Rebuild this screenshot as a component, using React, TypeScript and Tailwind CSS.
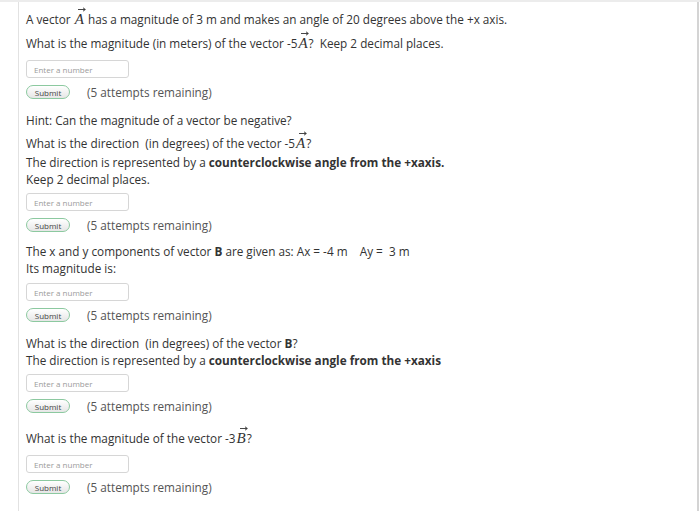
import React from 'react';

const Vec = ({ letter }: { letter: string }) => (
  <span className="relative inline-block font-['Liberation_Serif',serif] italic text-[15px] leading-[12px] px-[1px]">
    {letter}
    <svg className="absolute left-[4px] top-[-6px]" width="8" height="5" viewBox="0 0 8 5">
      <path d="M0 2.5 H7 M5 0.8 L7.4 2.5 L5 4.2" stroke="#333" strokeWidth="0.9" fill="none" />
    </svg>
  </span>
);

const AnswerBox = ({ top = 'mt-[8px]' }: { top?: string }) => (
  <div className={top}>
    <div className="w-[103px] h-[18px] border border-[#d6d6d6] rounded-[3px] flex items-center pl-[7px] text-[8px] text-[#9a9a9a]">
      Enter a number
    </div>
    <div className="mt-[7px] flex items-center h-[14px]">
      <div className="w-[44px] h-[14px] rounded-full border border-[#8cc9a0] bg-gradient-to-b from-[#ffffff] to-[#e6e6e6] flex items-center justify-center text-[8px] text-[#444]">
        Submit
      </div>
      <span className="ml-[17px] text-[11.75px] text-[#555]">(5 attempts remaining)</span>
    </div>
  </div>
);

export default function App() {
  return (
    <div className="w-[700px] h-[511px] bg-white border-t-2 border-[#ececec] font-['Open_Sans',sans-serif] text-[11.75px] leading-[17px] text-[#333] overflow-hidden">
      <div className="ml-[18px] w-[681px] h-full border-l border-[#e2e2e2] border-r-2 border-r-[#d4d4d4] pl-[7px] pt-[9px]">
        {/* Question 1 */}
        <p>A vector <Vec letter="A" /> has a magnitude of 3 m and makes an angle of 20 degrees above the +x axis.</p>
        <p className="mt-[7px]">What is the magnitude (in meters) of the vector -5<Vec letter="A" />?&nbsp; Keep 2 decimal places.</p>
        <AnswerBox top="mt-[8px]" />

        {/* Question 2 */}
        <p className="mt-[13px]">Hint: Can the magnitude of a vector be negative?</p>
        <p className="mt-[6px]">What is the direction&nbsp; (in degrees) of the vector -5<Vec letter="A" />?</p>
        <p className="mt-[2px]">
          The direction is represented by a <b>counterclockwise angle from the +xaxis.</b>
          <br />
          Keep 2 decimal places.
        </p>
        <AnswerBox top="mt-[5px]" />

        {/* Question 3 */}
        <p className="mt-[11px]">
          The x and y components of vector <b>B</b> are given as: Ax = -4 m&nbsp;&nbsp;&nbsp; Ay =&nbsp; 3 m
          <br />
          Its magnitude is:
        </p>
        <AnswerBox top="mt-[6px]" />

        {/* Question 4 */}
        <p className="mt-[13px]">
          What is the direction&nbsp; (in degrees) of the vector <b>B</b>?
          <br />
          The direction is represented by a <b>counterclockwise angle from the +xaxis</b>
        </p>
        <AnswerBox top="mt-[5px]" />

        {/* Question 5 */}
        <p className="mt-[17px]">What is the magnitude of the vector -3<Vec letter="B" />?</p>
        <AnswerBox top="mt-[8px]" />
      </div>
    </div>
  );
}
